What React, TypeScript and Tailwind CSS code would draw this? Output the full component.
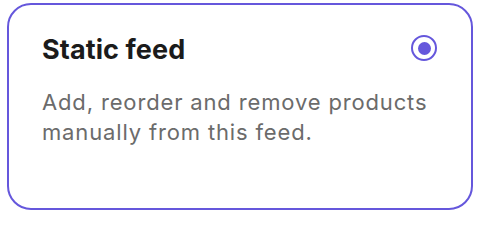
export default function App() {
  return (
    <div className="w-[480px] h-[214px] bg-white pl-[7px] pt-[3px]" style={{ fontFamily: 'Inter, "Noto Sans", sans-serif' }}>
      <div className="w-[466px] h-[207px] rounded-3xl border-2 border-[#6557dc] pl-[33px] pr-[34px] pt-[28px]">
        <div className="flex items-start justify-between">
          <h2 className="text-[27px] leading-[34px] font-bold text-[#1b1b1b] tracking-[0.1px]">Static feed</h2>
          <span className="mt-[2px] flex h-[26px] w-[26px] items-center justify-center rounded-full border-2 border-[#6557dc]">
            <span className="h-[13px] w-[13px] rounded-full bg-[#6557dc]" />
          </span>
        </div>
        <p className="mt-[20px] text-[22px] leading-[30px] tracking-[0.85px] text-[#6b6b6b]">
          Add, reorder and remove products manually from this feed.
        </p>
      </div>
    </div>
  );
}
